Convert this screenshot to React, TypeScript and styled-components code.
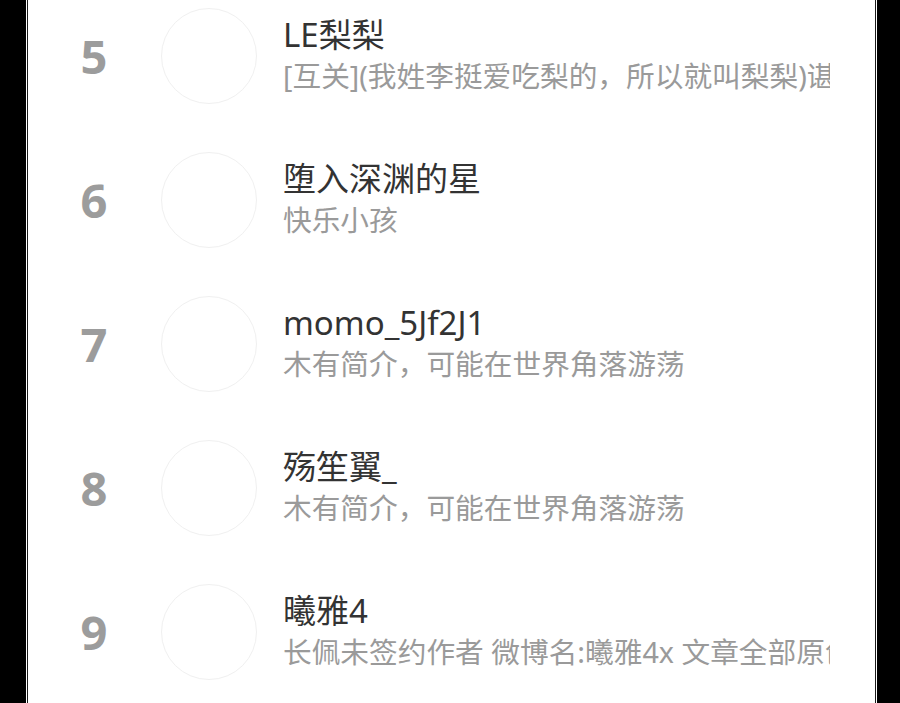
import styled, { createGlobalStyle } from "styled-components";

interface Writer {
  rank: number;
  name: string;
  intro: string;
}

const writers: Writer[] = [
  { rank: 5, name: "LE梨梨", intro: "[互关](我姓李挺爱吃梨的，所以就叫梨梨)谌欢迎来玩" },
  { rank: 6, name: "堕入深渊的星", intro: "快乐小孩" },
  { rank: 7, name: "momo_5Jf2J1", intro: "木有简介，可能在世界角落游荡" },
  { rank: 8, name: "殇笙翼_", intro: "木有简介，可能在世界角落游荡" },
  { rank: 9, name: "曦雅4", intro: "长佩未签约作者 微博名:曦雅4x 文章全部原创" },
];

const GlobalStyle = createGlobalStyle`
  html, body {
    margin: 0;
    padding: 0;
    background: #000;
    overflow: hidden;
  }
  body {
    font-family: "Noto Sans", "Noto Sans CJK SC", sans-serif;
  }
`;

const App = () => {
  return (
    <>
      <GlobalStyle />
      <Screen>
        <Frame>
          <Panel>
            <List>
              {writers.map((w) => (
                <Row key={w.rank}>
                  <Rank>{w.rank}</Rank>
                  <Avatar />
                  <Info>
                    <Name>{w.name}</Name>
                    <Intro>{w.intro}</Intro>
                  </Info>
                </Row>
              ))}
            </List>
          </Panel>
        </Frame>
      </Screen>
    </>
  );
};

export default App;

const Screen = styled.div`
  height: 703px;
  display: flex;
  padding-left: 26px;
`;

const Frame = styled.div`
  width: 849px;
  background: #fff;
  padding: 0 1px;
`;

const Panel = styled.div`
  height: 100%;
  background: #fff;
  border-left: 1px solid #1a1a1a;
  border-right: 1px solid #1a1a1a;
  overflow: hidden;
`;

const List = styled.div`
  margin-top: -16px;
`;

const Row = styled.div`
  height: 144px;
  display: flex;
  align-items: center;
  padding-left: 33px;
`;

const Rank = styled.div`
  width: 66px;
  margin-right: 34px;
  text-align: center;
  font-family: "Open Sans", "Noto Sans", sans-serif;
  font-weight: 700;
  font-size: 47px;
  color: #9c9c9c;
`;

const Avatar = styled.div`
  width: 94px;
  height: 94px;
  border-radius: 50%;
  border: 1px solid #f0f0f0;
  background: #fff;
  flex-shrink: 0;
`;

/* intro line is clipped at the column edge, no ellipsis */
const Info = styled.div`
  width: 547px;
  margin-left: 26px;
  margin-top: -4px;
  display: flex;
  flex-direction: column;
  overflow: hidden;
`;

const Name = styled.div`
  font-size: 33px;
  line-height: 44px;
  color: #333;
  white-space: nowrap;
`;

const Intro = styled.div`
  font-size: 28.7px;
  line-height: 38px;
  color: #9a9a9a;
  white-space: nowrap;
`;
